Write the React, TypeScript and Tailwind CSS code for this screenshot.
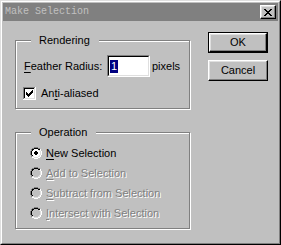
import React from 'react';

const FONT = { fontFamily: '"Liberation Sans", Arial, sans-serif' };

// tiny pixel-map drawer for the classic 3D widgets
const COLORS: Record<string, string> = {
  G: '#808080',
  K: '#000000',
  W: '#ffffff',
  D: '#dfdfdf',
  i: '#ffffff',
  g: '#c0c0c0',
};

const Pixels: React.FC<{ map: string[]; fill?: string }> = ({ map, fill }) => {
  const w = map[0].length;
  const h = map.length;
  return (
    <svg width={w} height={h} viewBox={`0 0 ${w} ${h}`} shapeRendering="crispEdges" className="block shrink-0">
      {map.map((row, y) =>
        row.split('').map((c, x) => {
          if (c === '.') return null;
          const color = c === 'i' && fill ? fill : COLORS[c];
          return <rect key={`${x}-${y}`} x={x} y={y} width={1} height={1} fill={color} />;
        })
      )}
    </svg>
  );
};

const RADIO = [
  '....GGGG....',
  '..GGKKKKGG..',
  '.GKKiiiiKKW.',
  '.GKiiiiiiDW.',
  'GKiiiiiiiiDW',
  'GKiiiiiiiiDW',
  'GKiiiiiiiiDW',
  'GKiiiiiiiiDW',
  '.GKiiiiiiDW.',
  '.GDDiiiiDDW.',
  '..WWDDDDWW..',
  '....WWWW....',
];

const RADIO_ON = [
  '....GGGG....',
  '..GGKKKKGG..',
  '.GKKiiiiKKW.',
  '.GKiiiiiiDW.',
  'GKiiiKKiiiDW',
  'GKiiKKKKiiDW',
  'GKiiKKKKiiDW',
  'GKiiiKKiiiDW',
  '.GKiiiiiiDW.',
  '.GDDiiiiDDW.',
  '..WWDDDDWW..',
  '....WWWW....',
];

const CHECK = [
  'GGGGGGGGGGGGW',
  'GKKKKKKKKKKDW',
  'GKiiiiiiiiiDW',
  'GKiiiiiiiKiDW',
  'GKiiiiiiKKiDW',
  'GKiKiiiKKKiDW',
  'GKiKKiKKKiiDW',
  'GKiKKKKKiiiDW',
  'GKiiKKKiiiiDW',
  'GKiiiKiiiiiDW',
  'GKiiiiiiiiiDW',
  'GDDDDDDDDDDDW',
  'WWWWWWWWWWWWW',
];

const CLOSE_X = [
  'KK....KK',
  '.KK..KK.',
  '..KKKK..',
  '...KK...',
  '..KKKK..',
  '.KK..KK.',
  'KK....KK',
];

const Group: React.FC<{ title: string; className?: string; children?: React.ReactNode }> = ({ title, className, children }) => (
  <div className={`relative border border-[#808080] shadow-[inset_1px_1px_0_#fff,1px_1px_0_#fff] ${className ?? ''}`}>
    <span className="absolute left-[15px] top-[-7px] bg-[#c0c0c0] pl-[8px] pr-[9px] leading-[13px] text-black">{title}</span>
    {children}
  </div>
);

const Button: React.FC<{ label: string; isDefault?: boolean }> = ({ label, isDefault }) => (
  <div className={`w-[60px] h-[21px] ${isDefault ? 'border border-black' : ''}`}>
    <div className="h-full flex items-center justify-center border border-t-white border-l-white border-r-black border-b-black shadow-[inset_-1px_-1px_0_#808080,inset_1px_1px_0_#dfdfdf] text-black leading-[13px]">
      {label}
    </div>
  </div>
);

const RadioRow: React.FC<{ on?: boolean; disabled?: boolean; mnemonic: string; rest: string }> = ({ on, disabled, mnemonic, rest }) => (
  <div className="flex items-center h-[20px]">
    <Pixels map={on ? RADIO_ON : RADIO} fill={disabled ? '#c0c0c0' : '#ffffff'} />
    <span
      className={`ml-[4px] leading-[13px] ${disabled ? 'text-[#808080] [text-shadow:1px_1px_0_#fff]' : 'text-black'}`}
    >
      <u className="underline-offset-[2px]">{mnemonic}</u>
      {rest}
    </span>
  </div>
);

export default function App() {
  return (
    <div className="w-[281px] h-[245px] bg-[#c0c0c0] text-[11px] border border-t-[#dfdfdf] border-l-[#dfdfdf] border-r-black border-b-black" style={FONT}>
      <div className="h-full flex flex-col p-px border border-t-white border-l-white border-r-[#808080] border-b-[#808080]">
        {/* title bar */}
        <div className="h-[18px] shrink-0 bg-[#808080] flex items-center justify-between pl-[2px] pr-[2px]">
          <span className="text-[10px] leading-[12px] text-[#c0c0c0]" style={{ fontFamily: '"Liberation Mono", monospace' }}>
            Make Selection
          </span>
          <div className="w-[16px] h-[14px] flex items-center justify-center bg-[#c0c0c0] border border-t-white border-l-white border-r-black border-b-black shadow-[inset_-1px_-1px_0_#808080,inset_1px_1px_0_#dfdfdf]">
            <Pixels map={CLOSE_X} />
          </div>
        </div>

        {/* body */}
        <div className="flex pl-[12px]">
          <div className="flex flex-col mt-[19px]">
            <Group title="Rendering" className="w-[175px] h-[69px] pl-[7px] pt-[14px]">
              <div className="flex items-center">
                <span className="w-[84px] pl-px leading-[13px] text-black">
                  <u className="underline-offset-[2px]">F</u>eather Radius:
                </span>
                <div className="w-[43px] h-[22px] border border-t-[#808080] border-l-[#808080] border-r-white border-b-white">
                  <div className="h-full bg-white border border-t-black border-l-black border-r-[#dfdfdf] border-b-[#dfdfdf] pl-px pt-px">
                    <span className="inline-block bg-[#000080] text-white leading-[13px] px-px">1</span>
                  </div>
                </div>
                <span className="ml-[2px] leading-[13px] text-black">pixels</span>
              </div>
              <div className="flex items-center mt-[10px]">
                <Pixels map={CHECK} />
                <span className="ml-[5px] leading-[13px] text-black">
                  An<u className="underline-offset-[2px]">t</u>i-aliased
                </span>
              </div>
            </Group>

            <Group title="Operation" className="w-[175px] h-[97px] mt-[23px] pl-[14px] pt-[10px]">
              <RadioRow on mnemonic="N" rest="ew Selection" />
              <RadioRow disabled mnemonic="A" rest="dd to Selection" />
              <RadioRow disabled mnemonic="S" rest="ubtract from Selection" />
              <RadioRow disabled mnemonic="I" rest="ntersect with Selection" />
            </Group>
          </div>

          <div className="flex flex-col gap-[7px] ml-[18px] mt-[11px]">
            <Button label="OK" isDefault />
            <Button label="Cancel" />
          </div>
        </div>
      </div>
    </div>
  );
}
